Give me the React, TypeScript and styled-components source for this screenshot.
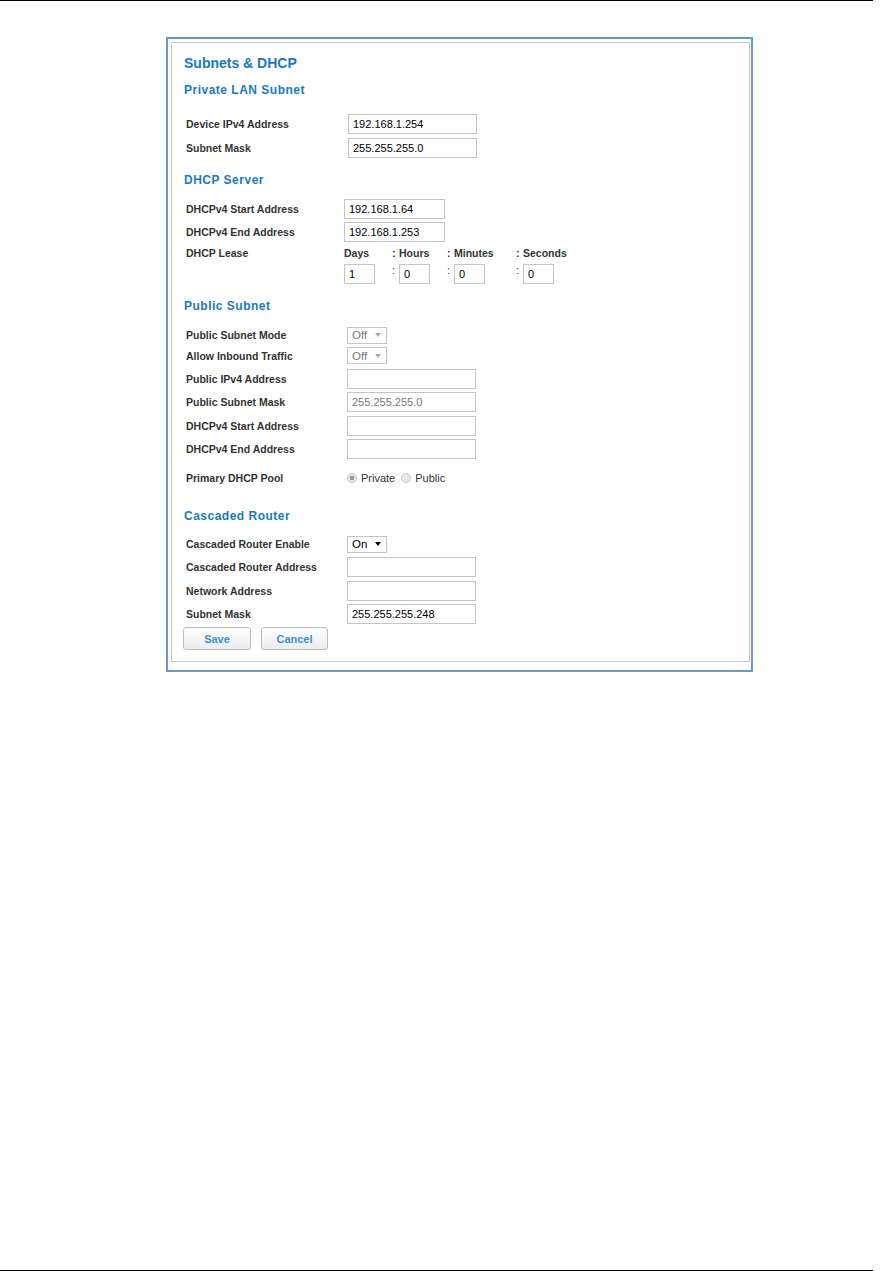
import React from 'react';
import styled, { createGlobalStyle } from 'styled-components';

const GlobalStyle = createGlobalStyle`
  html, body {
    margin: 0;
    padding: 0;
    background: #ffffff;
  }
  body {
    font-family: "Liberation Sans", Arial, sans-serif;
  }
`;

const Page = styled.div`
  display: flex;
  flex-direction: column;
  height: 1271px;
`;

const Rule = styled.div<{ $bottom?: boolean }>`
  width: 873px;
  height: 1px;
  background: #000;
  margin-top: ${(p) => (p.$bottom ? 'auto' : '0')};
`;

const Frame = styled.div`
  box-sizing: border-box;
  margin: 36px 0 0 166px;
  width: 587px;
  border: 2px solid #6699cc;
  padding: 3px 1px 8px 3px;
`;

const Inner = styled.div`
  border: 1px solid #c8c8c8;
  padding: 12px 12px 11px 12px;
`;

const Title = styled.h1`
  margin: 0;
  font-size: 14px;
  line-height: 16px;
  font-weight: bold;
  color: #1a7abd;
`;

const SectionTitle = styled.h2<{ $top: number; $bottom: number }>`
  margin: ${(p) => p.$top}px 0 ${(p) => p.$bottom}px;
  font-size: 12px;
  line-height: 16px;
  letter-spacing: 0.5px;
  font-weight: bold;
  color: #1a7abd;
`;

const Rows = styled.div`
  display: flex;
  flex-direction: column;
  gap: 3.5px;
  padding-left: 2px;
`;

const Row = styled.div<{ $label: number; $extra?: number; $start?: boolean }>`
  display: grid;
  grid-template-columns: ${(p) => p.$label}px 1fr;
  align-items: ${(p) => (p.$start ? 'start' : 'center')};
  margin-top: ${(p) => p.$extra ?? 0}px;
`;

const Label = styled.div`
  font-size: 10.5px;
  line-height: 14px;
  font-weight: bold;
  color: #333;
`;

const TextBox = styled.div<{ $w: number; $disabled?: boolean }>`
  box-sizing: border-box;
  width: ${(p) => p.$w}px;
  height: 20px;
  border: 1px solid #c4c4c4;
  background: #fff;
  padding: 0 4px;
  font-size: 11px;
  line-height: 18px;
  color: ${(p) => (p.$disabled ? '#777' : '#000')};
`;

const SelectBox = styled.div<{ $disabled?: boolean }>`
  box-sizing: border-box;
  width: 40px;
  height: 17px;
  border: 1px solid #c4c4c4;
  background: #fff;
  display: flex;
  align-items: center;
  justify-content: space-between;
  padding: 0 5px 0 4px;
  font-size: 11.5px;
  color: ${(p) => (p.$disabled ? '#777' : '#000')};
`;

const Arrow = styled.span<{ $disabled?: boolean }>`
  width: 0;
  height: 0;
  border-left: 3px solid transparent;
  border-right: 3px solid transparent;
  border-top: 4px solid ${(p) => (p.$disabled ? '#aaa' : '#000')};
`;

const LeaseGrid = styled.div`
  display: grid;
  grid-template-columns: 48px 55px 69px auto;
  row-gap: 4px;
`;

const LeaseHead = styled.div`
  display: flex;
  font-size: 10.5px;
  line-height: 14px;
  font-weight: bold;
  color: #333;
`;

const LeaseCell = styled.div`
  display: flex;
  align-items: flex-start;
`;

const Colon = styled.span<{ $raised?: boolean }>`
  width: 7px;
  font-size: 11px;
  line-height: ${(p) => (p.$raised ? '12px' : '14px')};
  color: #333;
  font-weight: ${(p) => (p.$raised ? 'normal' : 'bold')};
`;

const RadioGroup = styled.div`
  display: flex;
  align-items: center;
  font-size: 11px;
  color: #333;
`;

const Radio = styled.span<{ $checked?: boolean }>`
  box-sizing: border-box;
  width: 10px;
  height: 10px;
  border-radius: 50%;
  border: 1px solid #c8c8c8;
  background: ${(p) =>
    p.$checked
      ? 'radial-gradient(circle, #9a9a9a 0 2.2px, #e6e6e6 2.6px)'
      : '#e9e9e9'};
  margin-right: 4px;
`;

const RadioText = styled.span`
  margin-right: 6px;
`;

const Buttons = styled.div`
  display: flex;
  gap: 10px;
  margin-top: 3px;
  margin-left: -1px;
`;

const Button = styled.button<{ $w: number }>`
  box-sizing: border-box;
  width: ${(p) => p.$w}px;
  height: 23px;
  border: 1px solid #bdbdbd;
  border-radius: 3px;
  background: linear-gradient(#ffffff, #ececec);
  font-family: "Liberation Sans", Arial, sans-serif;
  font-size: 11px;
  font-weight: bold;
  color: #3b8fd5;
  cursor: pointer;
  padding: 0;
`;

const Field = ({ label, width, children, w = 129, value, disabled }: {
  label: string;
  width: number;
  children?: React.ReactNode;
  w?: number;
  value?: string;
  disabled?: boolean;
}) => (
  <Row $label={width}>
    <Label>{label}</Label>
    {children ?? <TextBox $w={w} $disabled={disabled}>{value}</TextBox>}
  </Row>
);

const Select = ({ value, disabled }: { value: string; disabled?: boolean }) => (
  <SelectBox $disabled={disabled}>
    <span>{value}</span>
    <Arrow $disabled={disabled} />
  </SelectBox>
);

const App: React.FC = () => {
  return (
    <Page>
      <GlobalStyle />
      <Rule />
      <Frame>
        <Inner>
          <Title>Subnets &amp; DHCP</Title>

          <SectionTitle $top={11} $bottom={16}>Private LAN Subnet</SectionTitle>
          <Rows>
            <Field label="Device IPv4 Address" width={162} value="192.168.1.254" />
            <Field label="Subnet Mask" width={162} value="255.255.255.0" />
          </Rows>

          <SectionTitle $top={14} $bottom={11}>DHCP Server</SectionTitle>
          <Rows>
            <Field label="DHCPv4 Start Address" width={158} w={101} value="192.168.1.64" />
            <Field label="DHCPv4 End Address" width={158} w={101} value="192.168.1.253" />
            <Row $label={158} $start>
              <Label>DHCP Lease</Label>
              <LeaseGrid>
                <LeaseHead>Days</LeaseHead>
                <LeaseHead><Colon>:</Colon>Hours</LeaseHead>
                <LeaseHead><Colon>:</Colon>Minutes</LeaseHead>
                <LeaseHead><Colon>:</Colon>Seconds</LeaseHead>
                <LeaseCell><TextBox $w={31}>1</TextBox></LeaseCell>
                <LeaseCell><Colon $raised>:</Colon><TextBox $w={31}>0</TextBox></LeaseCell>
                <LeaseCell><Colon $raised>:</Colon><TextBox $w={31}>0</TextBox></LeaseCell>
                <LeaseCell><Colon $raised>:</Colon><TextBox $w={31}>0</TextBox></LeaseCell>
              </LeaseGrid>
            </Row>
          </Rows>

          <SectionTitle $top={14} $bottom={13}>Public Subnet</SectionTitle>
          <Rows>
            <Field label="Public Subnet Mode" width={161}>
              <Select value="Off" disabled />
            </Field>
            <Field label="Allow Inbound Traffic" width={161}>
              <Select value="Off" disabled />
            </Field>
            <Row $label={161} $extra={1}>
              <Label>Public IPv4 Address</Label>
              <TextBox $w={129} />
            </Row>
            <Field label="Public Subnet Mask" width={161} value="255.255.255.0" disabled />
            <Field label="DHCPv4 Start Address" width={161} />
            <Field label="DHCPv4 End Address" width={161} />
            <Row $label={161} $extra={8}>
              <Label>Primary DHCP Pool</Label>
              <RadioGroup>
                <Radio $checked />
                <RadioText>Private</RadioText>
                <Radio />
                <RadioText>Public</RadioText>
              </RadioGroup>
            </Row>
          </Rows>

          <SectionTitle $top={23} $bottom={12}>Cascaded Router</SectionTitle>
          <Rows>
            <Field label="Cascaded Router Enable" width={161}>
              <Select value="On" />
            </Field>
            <Row $label={161} $extra={1}>
              <Label>Cascaded Router Address</Label>
              <TextBox $w={129} />
            </Row>
            <Field label="Network Address" width={161} />
            <Field label="Subnet Mask" width={161} value="255.255.255.248" />
          </Rows>

          <Buttons>
            <Button $w={68}>Save</Button>
            <Button $w={67}>Cancel</Button>
          </Buttons>
        </Inner>
      </Frame>
      <Rule $bottom />
    </Page>
  );
};

export default App;
